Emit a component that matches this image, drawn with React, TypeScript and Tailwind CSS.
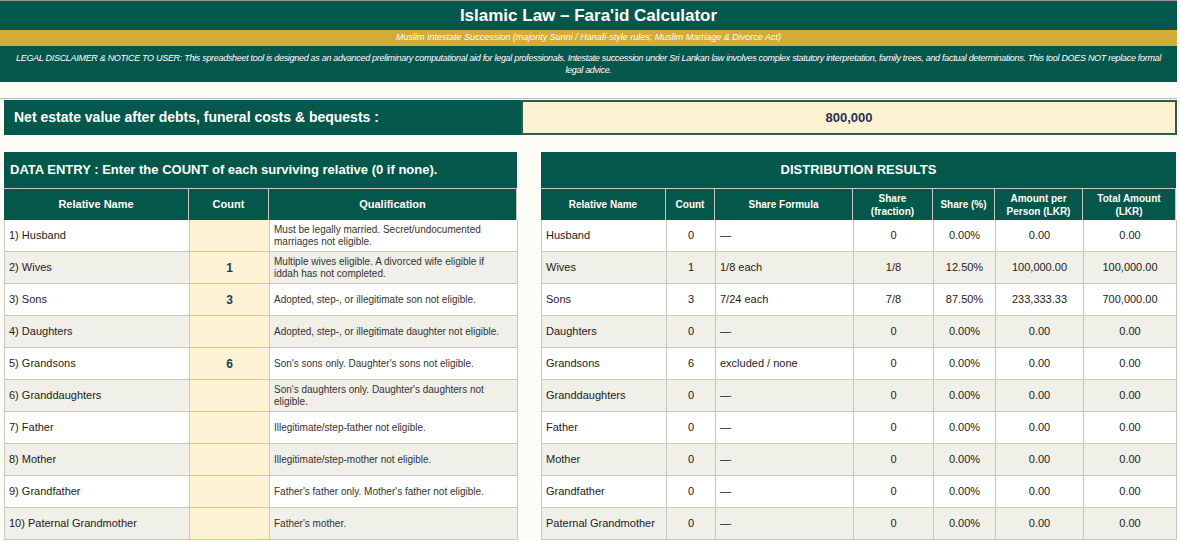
const G = "bg-[#03574b]";
const left = [
  ["1) Husband", "", "Must be legally married. Secret/undocumented marriages not eligible."],
  ["2) Wives", "1", "Multiple wives eligible. A divorced wife eligible if iddah has not completed."],
  ["3) Sons", "3", "Adopted, step-, or illegitimate son not eligible."],
  ["4) Daughters", "", "Adopted, step-, or illegitimate daughter not eligible."],
  ["5) Grandsons", "6", "Son's sons only. Daughter's sons not eligible."],
  ["6) Granddaughters", "", "Son's daughters only. Daughter's daughters not eligible."],
  ["7) Father", "", "Illegitimate/step-father not eligible."],
  ["8) Mother", "", "Illegitimate/step-mother not eligible."],
  ["9) Grandfather", "", "Father's father only. Mother's father not eligible."],
  ["10) Paternal Grandmother", "", "Father's mother."],
];
const right = [
  ["Husband", "0", "—", "0", "0.00%", "0.00", "0.00"],
  ["Wives", "1", "1/8  each", "1/8", "12.50%", "100,000.00", "100,000.00"],
  ["Sons", "3", "7/24 each", "7/8", "87.50%", "233,333.33", "700,000.00"],
  ["Daughters", "0", "—", "0", "0.00%", "0.00", "0.00"],
  ["Grandsons", "6", "excluded / none", "0", "0.00%", "0.00", "0.00"],
  ["Granddaughters", "0", "—", "0", "0.00%", "0.00", "0.00"],
  ["Father", "0", "—", "0", "0.00%", "0.00", "0.00"],
  ["Mother", "0", "—", "0", "0.00%", "0.00", "0.00"],
  ["Grandfather", "0", "—", "0", "0.00%", "0.00", "0.00"],
  ["Paternal Grandmother", "0", "—", "0", "0.00%", "0.00", "0.00"],
];
const lc = "grid grid-cols-[185px_80px_248px]";
const rc = "grid grid-cols-[125px_49px_138px_80px_62px_88px_93px]";
const cell = "border-r border-b border-[#c8c8c0] flex items-center px-1";

export default function App() {
  return (
    <div className="w-[1180px] h-[542px] overflow-hidden bg-[#fdfcf7] text-[11px] text-[#222]" style={{ fontFamily: '"Liberation Sans", Arial, sans-serif' }}>
      <div className="w-[1177px]">
        <div className={`${G} h-[30px] flex items-center justify-center text-white font-bold text-[17px] border-t border-[#999]`}>Islamic Law – Fara'id Calculator</div>
        <div className="bg-[#d4ab36] h-[16px] flex items-center justify-center text-white italic text-[9px]">Muslim Intestate Succession (majority Sunni / Hanafi-style rules; Muslim Marriage &amp; Divorce Act)</div>
        <div className={`${G} h-[36px] flex items-center justify-center text-center text-white italic text-[9px] leading-[12px] px-2 tracking-[-0.3px]`}>LEGAL DISCLAIMER &amp; NOTICE TO USER: This spreadsheet tool is designed as an advanced preliminary computational aid for legal professionals. Intestate succession under Sri Lankan law involves complex statutory interpretation, family trees, and factual determinations. This tool DOES NOT replace formal legal advice.</div>
        <div className="h-[17px] border-b border-[#bbb]"></div>
        <div className="flex h-[35px] mt-[1px]">
          <div className={`${G} w-[517px] ml-[4px] flex items-center px-[10px] text-white font-bold text-[14px]`}>Net estate value after debts, funeral costs &amp; bequests :</div>
          <div className="flex-1 bg-[#fdf3d2] border-2 border-[#2f5b4a] flex items-center justify-center font-bold text-[13px] text-[#1f3350]">800,000</div>
        </div>
        <div className="flex gap-[24px] mt-[17px] ml-[4px]">
          <div className="w-[513px]">
            <div className={`${G} h-[36px] flex items-center px-[6px] text-white font-bold text-[13px]`}>DATA ENTRY : Enter the COUNT of each surviving relative (0 if none).</div>
            <div className={`${lc} ${G} h-[32px] text-white font-bold text-[11px] border-t border-[#c8c8c0]`}>
              {["Relative Name", "Count", "Qualification"].map(h => <div key={h} className="flex items-center justify-center border-r border-[#c8c8c0]">{h}</div>)}
            </div>
            {left.map((r, i) => (
              <div key={i} className={`${lc} h-[32px] ${i % 2 ? "bg-[#f0efe8]" : "bg-white"} border-l border-[#c8c8c0]`}>
                <div className={cell}>{r[0]}</div>
                <div className={`${cell} justify-center bg-[#fdf2d3] font-bold text-[#1f3b5c] text-[12px]`}>{r[1]}</div>
                <div className={`${cell} text-[10px] leading-[12px] text-[#333] pr-4`}>{r[2]}</div>
              </div>
            ))}
          </div>
          <div className="w-[635px]">
            <div className={`${G} h-[36px] flex items-center justify-center text-white font-bold text-[13px]`}>DISTRIBUTION RESULTS</div>
            <div className={`${rc} ${G} h-[32px] text-white font-bold text-[10px] leading-[13px] border-t border-[#c8c8c0]`}>
              {["Relative Name", "Count", "Share Formula", "Share (fraction)", "Share (%)", "Amount per Person (LKR)", "Total Amount (LKR)"].map(h => <div key={h} className="flex items-center justify-center text-center border-r border-[#c8c8c0] px-1">{h}</div>)}
            </div>
            {right.map((r, i) => (
              <div key={i} className={`${rc} h-[32px] ${i % 2 ? "bg-[#f0efe8]" : "bg-white"} border-l border-[#c8c8c0]`}>
                <div className={cell}>{r[0]}</div>
                <div className={`${cell} justify-center`}>{r[1]}</div>
                <div className={cell}>{r[2]}</div>
                {r.slice(3).map((v, j) => <div key={j} className={`${cell} justify-center`}>{v}</div>)}
              </div>
            ))}
          </div>
        </div>
      </div>
    </div>
  );
}
